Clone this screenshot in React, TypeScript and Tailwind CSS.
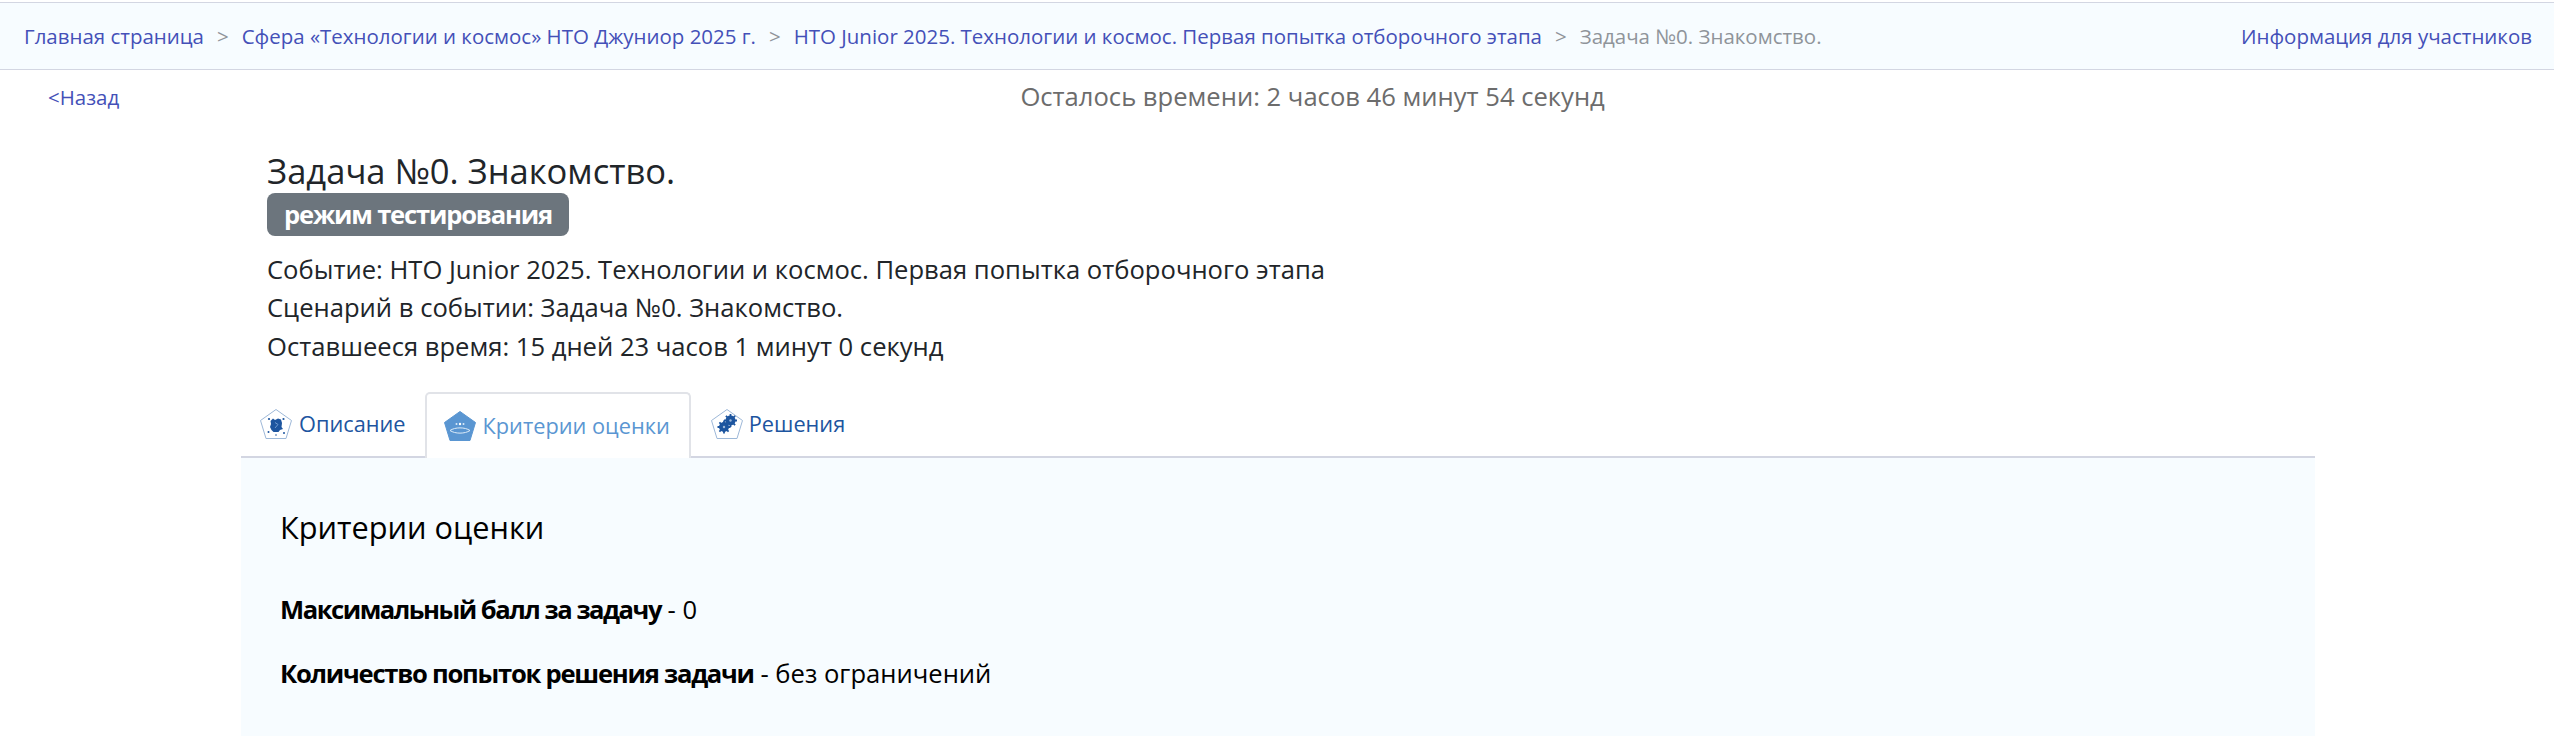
import React from 'react';

const crumbs = [
  'Главная страница',
  'Сфера «Технологии и космос» НТО Джуниор 2025 г.',
  'НТО Junior 2025. Технологии и космос. Первая попытка отборочного этапа',
];

function Pentagon({filled, children}: {filled?: boolean; children: React.ReactNode}) {
  return (
    <svg className="w-[32px] h-[32px] shrink-0" viewBox="0 0 32 32" fill="none" xmlns="http://www.w3.org/2000/svg">
      <path
        d="M16 1.5L31.5 12.5L26 30.5H6L0.5 12.5Z"
        fill={filled ? '#5a96d2' : '#ffffff'}
        stroke={filled ? '#5a96d2' : '#9db8d8'}
        strokeWidth="1"
      />
      {children}
    </svg>
  );
}

function BugIcon() {
  return (
    <Pentagon>
      <path d="M10.5 13L13 10.5L15 12L18 10.5L21 11.5L22 15L21.5 19L23 21L20 22L18.5 24H13.5L11.5 22L10 19L11 16Z" fill="#1d559f" />
      <circle cx="9" cy="11" r="1.1" fill="#1d559f" />
      <circle cx="23.5" cy="11" r="1.1" fill="#1d559f" />
      <circle cx="8.5" cy="24" r="1" fill="#1d559f" />
      <circle cx="24" cy="25" r="1" fill="#1d559f" />
      <circle cx="16" cy="27" r="0.8" fill="#1d559f" />
      <path d="M15 14.5L18 16.5L15 20" stroke="#6f9ad0" strokeWidth="1" />
    </Pentagon>
  );
}

function CriteriaIcon() {
  return (
    <Pentagon filled>
      <circle cx="12.5" cy="14" r="1" fill="#dcebf8" />
      <circle cx="16" cy="14" r="1.2" fill="#ffffff" />
      <circle cx="19.5" cy="14" r="1" fill="#dcebf8" />
      <path d="M6 20.5C11 17 21 17 26 20.5C21 24 11 24 6 20.5Z" stroke="#dcebf8" strokeWidth="1" />
    </Pentagon>
  );
}

function GearsIcon() {
  return (
    <Pentagon>
      <circle cx="19.5" cy="12.5" r="5" fill="#1d559f" />
      <circle cx="13" cy="19" r="5" fill="#1d559f" />
      <path d="M19.5 6V19M13 12.5H26M14.9 7.9L24.1 17.1M24.1 7.9L14.9 17.1" stroke="#1d559f" strokeWidth="1.8" />
      <path d="M13 12.5V25.5M6.5 19H19.5M8.4 14.4L17.6 23.6M17.6 14.4L8.4 23.6" stroke="#1d559f" strokeWidth="1.8" />
      <circle cx="19.5" cy="12.5" r="1.2" fill="#9db8d8" />
      <circle cx="13" cy="19" r="1.2" fill="#9db8d8" />
    </Pentagon>
  );
}

export default function App() {
  return (
    <div className="min-h-screen flex flex-col bg-white overflow-hidden font-['Open_Sans',sans-serif] text-[#212529]">
      <nav className="mt-[2px] h-[68px] bg-[#f7fcff] border-y border-[#d3d6e2] flex items-center justify-between pl-[24px] pr-[22px] text-[20.48px] text-[#4450b8]">
        <div className="flex items-center">
          {crumbs.map(c => (
            <React.Fragment key={c}>
              <a href="#">{c}</a>
              <span className="px-[13px] text-[#8f949a]">&gt;</span>
            </React.Fragment>
          ))}
          <span className="text-[#8f949a]">Задача №0. Знакомство.</span>
        </div>
        <a href="#">Информация для участников</a>
      </nav>

      <div className="flex items-center h-[54px] pl-[48px]">
        <a href="#" className="text-[20.48px] text-[#4450b8]">&lt;Назад</a>
        <div className="flex-1 pr-[48px] text-center text-[25.6px] text-[#6c6c6c]">
          Осталось времени: 2 часов 46 минут 54 секунд
        </div>
      </div>

      <main className="flex-1 flex flex-col ml-[241px] w-[2074px]">
        <div className="pl-[26px] pt-[25px]">
          <h1 className="text-[34.56px] leading-[44px]">Задача №0. Знакомство.</h1>
          <span className="inline-block h-[43px] px-[17px] rounded-[8px] bg-[#6c757d] text-white text-[25.6px] font-bold tracking-[-1.2px] leading-[43px]">
            режим тестирования
          </span>
          <div className="mt-[15px] text-[25.6px] leading-[38.4px]">
            <p>Событие: НТО Junior 2025. Технологии и космос. Первая попытка отборочного этапа</p>
            <p>Сценарий в событии: Задача №0. Знакомство.</p>
            <p>Оставшееся время: 15 дней 23 часов 1 минут 0 секунд</p>
          </div>
        </div>

        <div className="mt-[26px] flex items-end h-[66px] border-b-2 border-[#d3d6e2] text-[21.76px] text-[#1d559f]">
          <a href="#" className="flex items-center gap-[7px] h-full pl-[19px] pr-[19px]">
            <BugIcon />
            Описание
          </a>
          <a href="#" className="relative top-[2px] flex items-center gap-[7px] h-[66px] pl-[17px] pr-[19px] bg-white border-2 border-b-0 border-[#e1e3e8] rounded-t-[5px] text-[#5a96d2]">
            <CriteriaIcon />
            Критерии оценки
          </a>
          <a href="#" className="flex items-center gap-[6px] h-full pl-[20px] pr-[19px]">
            <GearsIcon />
            Решения
          </a>
        </div>

        <section className="flex-1 bg-[#f7fcff] pl-[39px] pt-[49px] text-black">
          <h2 className="text-[30.72px] leading-[40px]">Критерии оценки</h2>
          <p className="mt-[45px] text-[25.6px] leading-[36px]"><b className="font-bold tracking-[-1.48px]">Максимальный балл за задачу</b> - 0</p>
          <p className="mt-[28px] text-[25.6px] leading-[36px]"><b className="font-bold tracking-[-1.25px]">Количество попыток решения задачи</b> - без ограничений</p>
        </section>
      </main>
    </div>
  );
}
